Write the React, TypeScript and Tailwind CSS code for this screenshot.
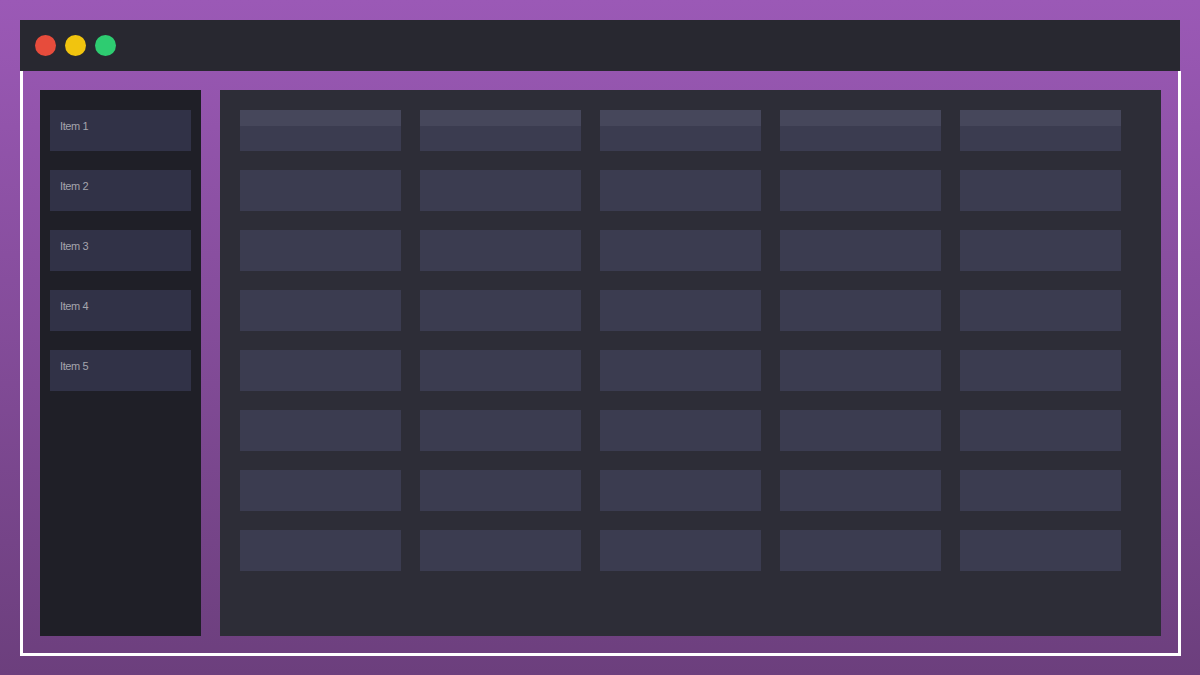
const columns = 5
const rows = 8
const menu = ['Item 1', 'Item 2', 'Item 3', 'Item 4', 'Item 5']

function Cell({ header }: { header: boolean }) {
  return (
    <div className="flex h-[41px] flex-col bg-[#3b3c50]">
      {header && <div className="h-4 bg-[#46475b]" />}
    </div>
  )
}

export default function App() {
  return (
    <div
      className="flex h-[675px] w-[1200px] flex-col bg-gradient-to-b from-[#9b59b6] to-[#6c3f7d] px-5 pt-5 pb-[19px]"
      style={{ fontFamily: '"Liberation Sans", Arial, sans-serif' }}
    >
      {/* title bar */}
      <div className="flex h-[51px] w-[1160px] items-center gap-[9px] bg-[#282830] pl-[15px]">
        <span className="h-[21px] w-[21px] rounded-full bg-[#e74c3c]" />
        <span className="h-[21px] w-[21px] rounded-full bg-[#f1c40f]" />
        <span className="h-[21px] w-[21px] rounded-full bg-[#2ecc71]" />
      </div>

      {/* window body */}
      <div className="flex w-[1161px] flex-1 gap-[19px] border-x-[3px] border-b-[3px] border-white px-[17px] pt-[19px] pb-[17px]">
        {/* sidebar */}
        <div className="flex w-[161px] flex-col gap-[19px] bg-[#1f1f27] px-[10px] py-5">
          {menu.map((label) => (
            <div
              key={label}
              className="h-[41px] bg-[#313247] px-[10px] pt-[10px] text-[11px] leading-[13px] tracking-[-0.4px] text-[#a5a5ad]"
            >
              {label}
            </div>
          ))}
        </div>

        {/* main grid */}
        <div className="flex-1 bg-[#2d2d37] p-5">
          <div className="grid grid-cols-[repeat(5,161px)] gap-[19px]">
            {[...Array(rows * columns)].map((_, i) => (
              <Cell key={i} header={i < columns} />
            ))}
          </div>
        </div>
      </div>
    </div>
  )
}
